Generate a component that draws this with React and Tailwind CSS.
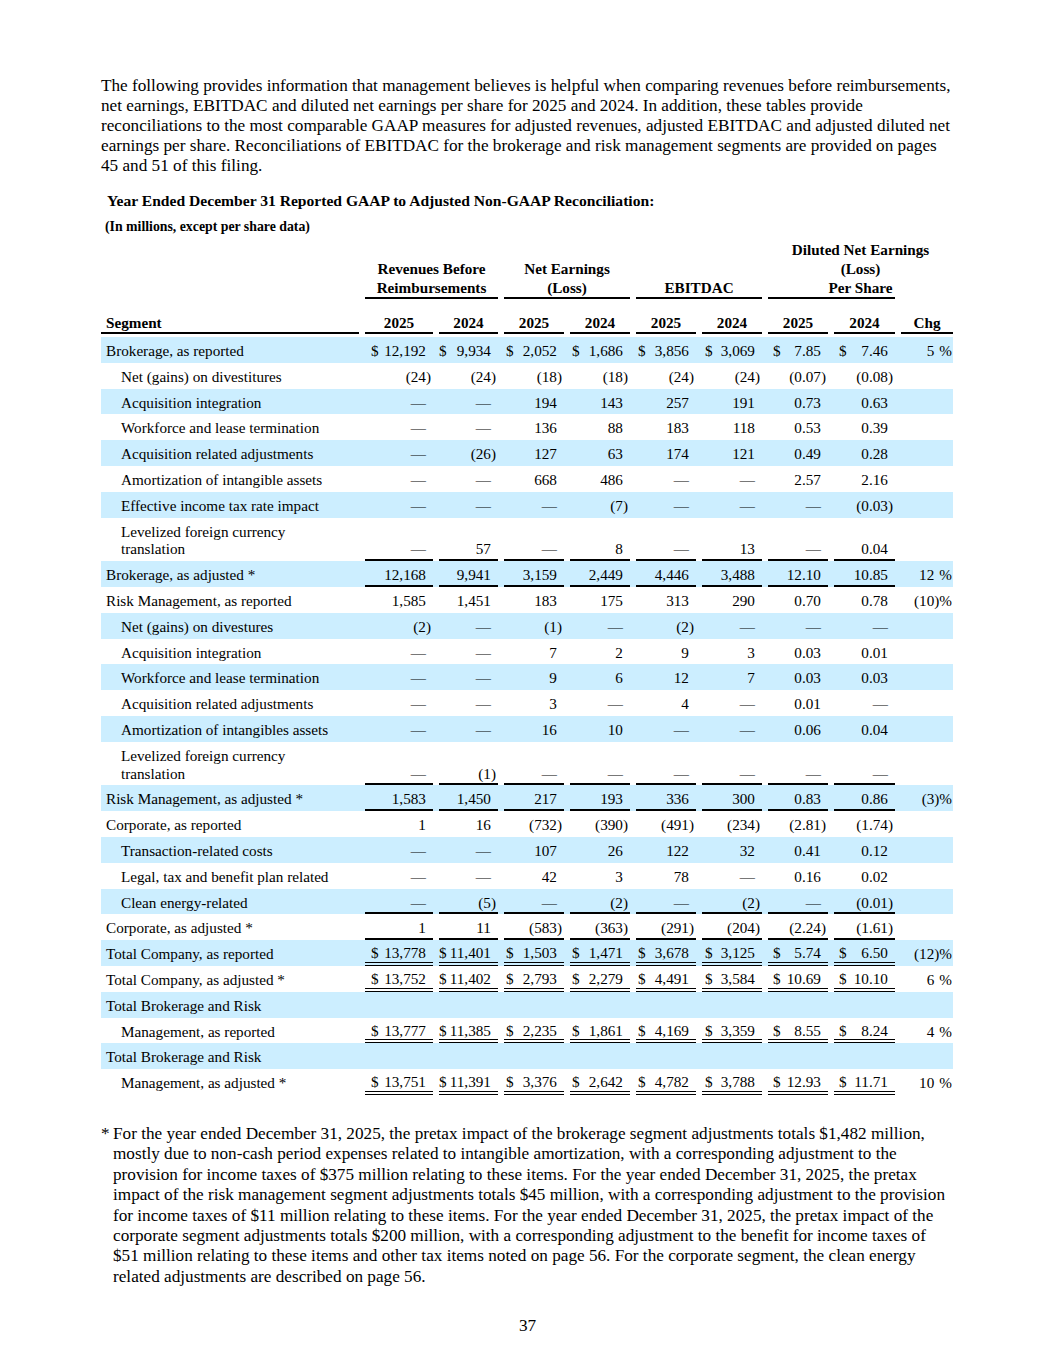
import clsx from 'clsx';

const COLS = 'grid grid-cols-[258px_68px_59px_60px_60px_60px_60px_60px_61px_52px] gap-x-[6px]';
const PADS = ['pl-[6px]', 'pl-0', 'pl-[2px]', 'pl-[2px]', 'pl-[2px]', 'pl-[3px]', 'pl-[5px]', 'pl-[5px]'];

const intro = [
    'The following provides information that management believes is helpful when comparing revenues before reimbursements,',
    'net earnings, EBITDAC and diluted net earnings per share for 2025 and 2024. In addition, these tables provide',
    'reconciliations to the most comparable GAAP measures for adjusted revenues, adjusted EBITDAC and adjusted diluted net',
    'earnings per share. Reconciliations of EBITDAC for the brokerage and risk management segments are provided on pages',
    '45 and 51 of this filing.',
];

const note = [
    'For the year ended December 31, 2025, the pretax impact of the brokerage segment adjustments totals $1,482 million,',
    'mostly due to non-cash period expenses related to intangible amortization, with a corresponding adjustment to the',
    'provision for income taxes of $375 million relating to these items. For the year ended December 31, 2025, the pretax',
    'impact of the risk management segment adjustments totals $45 million, with a corresponding adjustment to the provision',
    'for income taxes of $11 million relating to these items. For the year ended December 31, 2025, the pretax impact of the',
    'corporate segment adjustments totals $200 million, with a corresponding adjustment to the benefit for income taxes of',
    '$51 million relating to these items and other tax items noted on page 56. For the corporate segment, the clean energy',
    'related adjustments are described on page 56.',
];

const D = '—';
const LEV = ['Levelized foreign currency', 'translation'];

// label, indent, values, chg, dollar signs, line under values
const rows = [
    { label: 'Brokerage, as reported', v: ['12,192', '9,934', '2,052', '1,686', '3,856', '3,069', '7.85', '7.46'], chg: '5', dollar: true },
    { label: 'Net (gains) on divestitures', indent: true, v: ['(24)', '(24)', '(18)', '(18)', '(24)', '(24)', '(0.07)', '(0.08)'] },
    { label: 'Acquisition integration', indent: true, v: [D, D, '194', '143', '257', '191', '0.73', '0.63'] },
    { label: 'Workforce and lease termination', indent: true, v: [D, D, '136', '88', '183', '118', '0.53', '0.39'] },
    { label: 'Acquisition related adjustments', indent: true, v: [D, '(26)', '127', '63', '174', '121', '0.49', '0.28'] },
    { label: 'Amortization of intangible assets', indent: true, v: [D, D, '668', '486', D, D, '2.57', '2.16'] },
    { label: 'Effective income tax rate impact', indent: true, v: [D, D, D, '(7)', D, D, D, '(0.03)'] },
    { label: LEV, indent: true, v: [D, '57', D, '8', D, '13', D, '0.04'], line: 'single' },
    { label: 'Brokerage, as adjusted *', v: ['12,168', '9,941', '3,159', '2,449', '4,446', '3,488', '12.10', '10.85'], chg: '12', line: 'single' },
    { label: 'Risk Management, as reported', v: ['1,585', '1,451', '183', '175', '313', '290', '0.70', '0.78'], chg: '(10)' },
    { label: 'Net (gains) on divestures', indent: true, v: ['(2)', D, '(1)', D, '(2)', D, D, D] },
    { label: 'Acquisition integration', indent: true, v: [D, D, '7', '2', '9', '3', '0.03', '0.01'] },
    { label: 'Workforce and lease termination', indent: true, v: [D, D, '9', '6', '12', '7', '0.03', '0.03'] },
    { label: 'Acquisition related adjustments', indent: true, v: [D, D, '3', D, '4', D, '0.01', D] },
    { label: 'Amortization of intangibles assets', indent: true, v: [D, D, '16', '10', D, D, '0.06', '0.04'] },
    { label: LEV, indent: true, v: [D, '(1)', D, D, D, D, D, D], line: 'single' },
    { label: 'Risk Management, as adjusted *', v: ['1,583', '1,450', '217', '193', '336', '300', '0.83', '0.86'], chg: '(3)', line: 'single' },
    { label: 'Corporate, as reported', v: ['1', '16', '(732)', '(390)', '(491)', '(234)', '(2.81)', '(1.74)'] },
    { label: 'Transaction-related costs', indent: true, v: [D, D, '107', '26', '122', '32', '0.41', '0.12'] },
    { label: 'Legal, tax and benefit plan related', indent: true, v: [D, D, '42', '3', '78', D, '0.16', '0.02'] },
    { label: 'Clean energy-related', indent: true, v: [D, '(5)', D, '(2)', D, '(2)', D, '(0.01)'], line: 'single' },
    { label: 'Corporate, as adjusted *', v: ['1', '11', '(583)', '(363)', '(291)', '(204)', '(2.24)', '(1.61)'], line: 'single' },
    { label: 'Total Company, as reported', v: ['13,778', '11,401', '1,503', '1,471', '3,678', '3,125', '5.74', '6.50'], chg: '(12)', dollar: true, line: 'double' },
    { label: 'Total Company, as adjusted *', v: ['13,752', '11,402', '2,793', '2,279', '4,491', '3,584', '10.69', '10.10'], chg: '6', dollar: true, line: 'double' },
    { label: 'Total Brokerage and Risk' },
    { label: 'Management, as reported', indent: true, v: ['13,777', '11,385', '2,235', '1,861', '4,169', '3,359', '8.55', '8.24'], chg: '4', dollar: true, line: 'double' },
    { label: 'Total Brokerage and Risk' },
    { label: 'Management, as adjusted *', indent: true, v: ['13,751', '11,391', '3,376', '2,642', '4,782', '3,788', '12.93', '11.71'], chg: '10', dollar: true, line: 'double' },
];

function Amount({ value, dollar, pad, line }) {
    const paren = value.endsWith(')');
    return (
        <div
            className={clsx(
                'flex h-full items-end justify-between pr-[2px]',
                pad,
                line === 'single' && 'border-b-2 border-black pb-[1px]',
                line === 'double' && 'border-b-4 border-double border-black pb-0',
                !line && 'pb-[3px]'
            )}
        >
            <span>{dollar ? '$' : ''}</span>
            <span className="whitespace-nowrap">
                {value}
                {!paren && <span className="invisible">)</span>}
            </span>
        </div>
    );
}

function Row({ row, shaded }) {
    const tall = Array.isArray(row.label);
    return (
        <div className={clsx(COLS, tall ? 'h-[43.6px]' : 'h-[25.8px]', shaded && 'bg-[#cceeff]')}>
            <div className={clsx('flex h-full items-end pb-[3px] whitespace-nowrap', row.indent ? 'pl-[20px]' : 'pl-[5px]')}>
                {tall ? (
                    <span>
                        {row.label[0]}
                        <br />
                        {row.label[1]}
                    </span>
                ) : (
                    row.label
                )}
            </div>
            {(row.v || Array(8).fill('')).map((value, i) => (
                <Amount key={i} value={value} dollar={row.dollar} pad={PADS[i]} line={row.v && row.line} />
            ))}
            <div className="flex h-full items-end justify-end pb-[3px] pr-[1px] whitespace-nowrap">
                {row.chg && (
                    <span>
                        {row.chg}
                        {!row.chg.endsWith(')') && <span className="invisible">)</span>}%
                    </span>
                )}
            </div>
        </div>
    );
}

function GroupHead({ lines }) {
    return (
        <div className="col-span-2 flex flex-col items-center justify-end border-b-2 border-black leading-[19px] whitespace-nowrap">
            {lines.map((l) => (
                <span key={l}>{l}</span>
            ))}
        </div>
    );
}

export default function App() {
    return (
        <div className="min-h-[1365px] w-[1055px] bg-white font-['Liberation_Serif',serif] text-black">
            <div className="pl-[101px] pt-[76px]">
                <div className="text-[17.2px] leading-[20px] whitespace-nowrap">
                    {intro.map((l) => (
                        <div key={l}>{l}</div>
                    ))}
                </div>

                <div className="mt-[16px] pl-[6px] text-[15.6px] font-bold leading-[18px]">
                    Year Ended December 31 Reported GAAP to Adjusted Non-GAAP Reconciliation:
                </div>
                <div className="mt-[9px] pl-[4px] text-[13.8px] font-bold leading-[16px]">
                    (In millions, except per share data)
                </div>

                <div className="w-[852px] text-[15.2px] leading-[17.8px]">
                    <div className={clsx(COLS, 'mt-[5px] font-bold')}>
                        <div />
                        <GroupHead lines={['Revenues Before', 'Reimbursements']} />
                        <GroupHead lines={['Net Earnings', '(Loss)']} />
                        <GroupHead lines={['EBITDAC']} />
                        <div className="col-span-3 flex flex-col leading-[19px] whitespace-nowrap">
                            <div className="flex flex-col items-center">
                                <span>Diluted Net Earnings</span>
                                <span>(Loss)</span>
                                <span>Per Share</span>
                            </div>
                            <div className="w-[127px] border-b-2 border-black" />
                        </div>
                    </div>
                    <div className={clsx(COLS, 'h-[35px] font-bold leading-[19px]')}>
                        <div className="flex items-end border-b-2 border-black pl-[5px]">Segment</div>
                        {['2025', '2024', '2025', '2024', '2025', '2024', '2025', '2024', 'Chg'].map((y, i) => (
                            <div key={i} className="flex items-end justify-center border-b-2 border-black">
                                {y}
                            </div>
                        ))}
                    </div>

                    <div className="mt-[3px]">
                        {rows.map((row, i) => (
                            <Row key={i} row={row} shaded={i % 2 === 0} />
                        ))}
                    </div>
                </div>

                <div className="mt-[29px] flex text-[17.2px] leading-[20.4px]">
                    <div className="w-[12px] shrink-0">*</div>
                    <div className="whitespace-nowrap">
                        {note.map((l) => (
                            <div key={l}>{l}</div>
                        ))}
                    </div>
                </div>
            </div>

            <div className="mt-[29px] text-center text-[17.2px] leading-[20px]">37</div>
        </div>
    );
}
